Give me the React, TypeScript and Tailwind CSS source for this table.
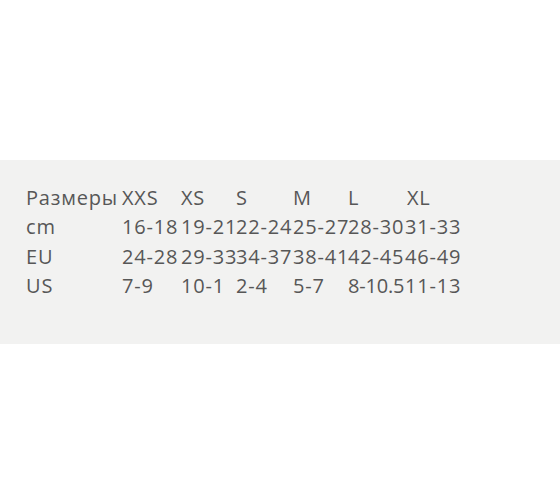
const sizes = ["XXS", "XS", "S", "M", "L", "XL"];

const rows: { label: string; values: string[] }[] = [
  { label: "cm", values: ["16-18", "19-21", "22-24", "25-27", "28-30", "31-33"] },
  { label: "EU", values: ["24-28", "29-33", "34-37", "38-41", "42-45", "46-49"] },
  { label: "US", values: ["7-9", "10-1", "2-4", "5-7", "8-10.5", "11-13"] },
];

const Cell = ({ children, tight }: { children: React.ReactNode; tight?: boolean }) => (
  <div className={"whitespace-nowrap h-[29.3px] leading-[29.3px] " + (tight ? "tracking-[-0.2px]" : "")}>
    {children}
  </div>
);

const App = () => {
  return (
    <div className="w-[560px] h-[504px] bg-white pt-[160px]">
      <div
        className="h-[184px] bg-[#f2f2f1] pl-[26px] pt-[23px] text-[20px] tracking-[0.8px] text-[#575757]"
        style={{ fontFamily: '"Open Sans", "Noto Sans", sans-serif' }}
      >
        <div className="grid grid-cols-[96px_59px_55px_57px_55px_57px_60px]">
          <Cell>Размеры</Cell>
          {sizes.map((s, i) => (
            <Cell key={s}>
              <span className={i === 5 ? "pl-[2px]" : ""}>{s}</span>
            </Cell>
          ))}
          {rows.map((r) => (
            <>
              <Cell key={r.label}>{r.label}</Cell>
              {r.values.map((v, i) => (
                <Cell key={r.label + i} tight={v === "8-10.5"}>
                  {v}
                </Cell>
              ))}
            </>
          ))}
        </div>
      </div>
    </div>
  );
};

export default App;
